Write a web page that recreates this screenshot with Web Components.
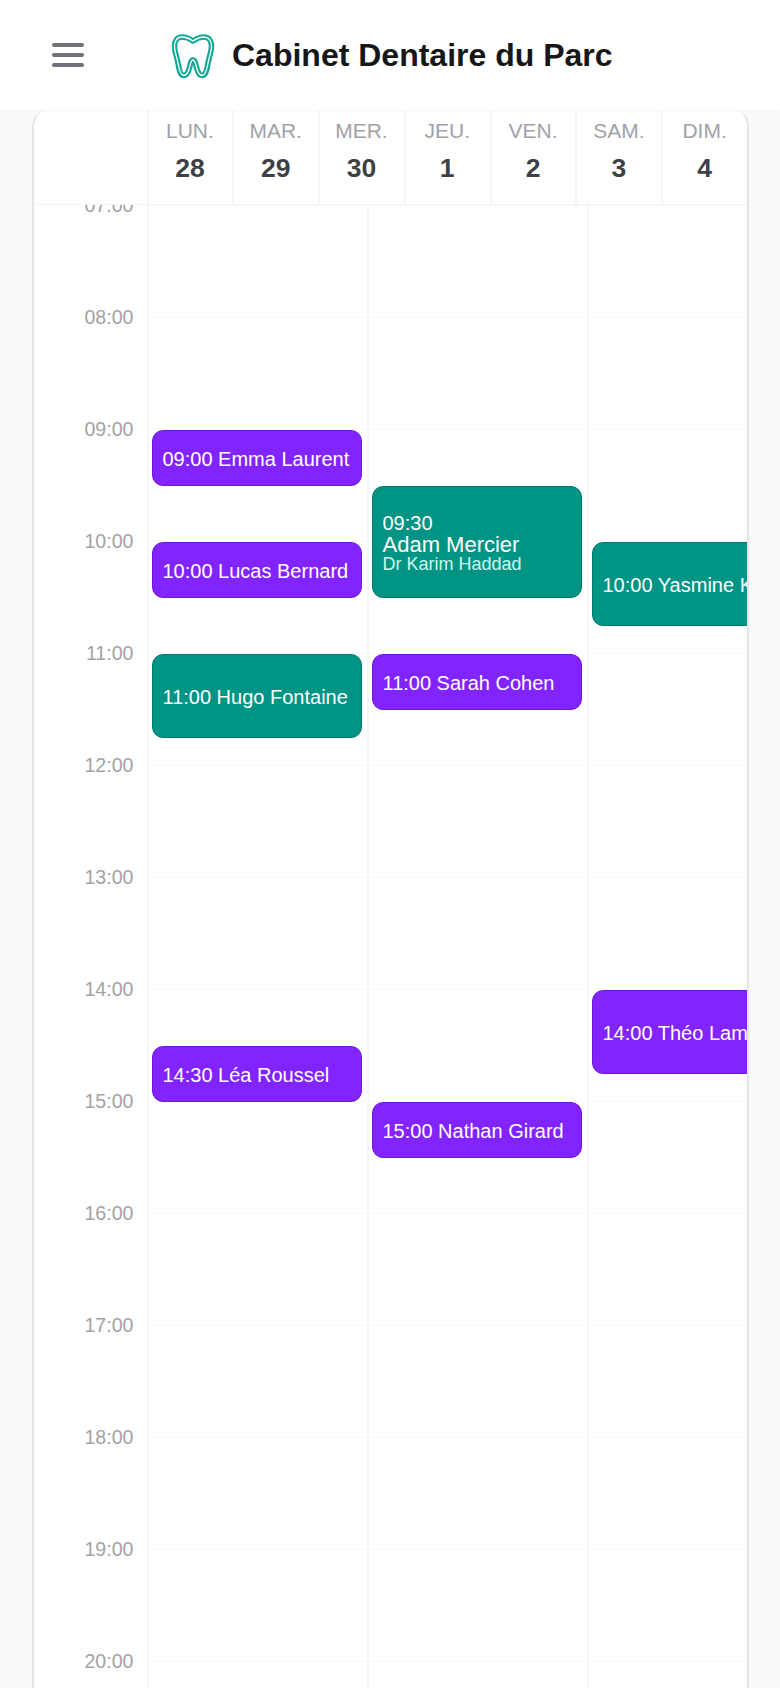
<!DOCTYPE html>
<html lang="fr">
<head>
<meta charset="utf-8">
<title>Cabinet Dentaire du Parc</title>
<style>
  html, body { margin: 0; height: 100%; }
  body {
    background: #fafafa;
    font-family: "Liberation Sans", Arial, sans-serif;
    overflow: hidden;
    display: flex;
    flex-direction: column;
  }
</style>
</head>
<body>
<app-header>Cabinet Dentaire du Parc</app-header>
<agenda-card>
  <week-head slot="head">
    <day-cell day="LUN." date="28"></day-cell>
    <day-cell day="MAR." date="29"></day-cell>
    <day-cell day="MER." date="30"></day-cell>
    <day-cell day="JEU." date="1"></day-cell>
    <day-cell day="VEN." date="2"></day-cell>
    <day-cell day="SAM." date="3"></day-cell>
    <day-cell day="DIM." date="4"></day-cell>
  </week-head>
  <time-axis slot="axis" from="7" to="20"></time-axis>
  <day-column>
    <appt-event start="09:00" mins="30">09:00 Emma Laurent</appt-event>
    <appt-event start="10:00" mins="30">10:00 Lucas Bernard</appt-event>
    <appt-event start="11:00" mins="45" kind="teal">11:00 Hugo Fontaine</appt-event>
    <appt-event start="14:30" mins="30">14:30 Léa Roussel</appt-event>
  </day-column>
  <day-column>
    <appt-event start="09:30" mins="60" kind="teal">
      <span slot="time">09:30</span>
      <span slot="name">Adam Mercier</span>
      <span slot="doctor">Dr Karim Haddad</span>
    </appt-event>
    <appt-event start="11:00" mins="30">11:00 Sarah Cohen</appt-event>
    <appt-event start="15:00" mins="30">15:00 Nathan Girard</appt-event>
  </day-column>
  <day-column>
    <appt-event start="10:00" mins="45" kind="teal">10:00 Yasmine Khelifi</appt-event>
    <appt-event start="14:00" mins="45">14:00 Théo Lambert</appt-event>
  </day-column>
</agenda-card>

<script>
const HOUR_HEIGHT = 112;
const FIRST_HOUR = 7;

class AppHeader extends HTMLElement {
  constructor() {
    super();
    this.attachShadow({mode: 'open'}).innerHTML = `
      <style>
        :host {
          display: flex;
          align-items: center;
          flex: none;
          height: 110px;
          background: #fff;
          box-shadow: 0 1px 2px rgba(0, 0, 0, .03);
          position: relative;
          z-index: 2;
        }
        .menu {
          display: flex;
          flex-direction: column;
          gap: 6px;
          width: 32px;
          margin: 0 87px 0 52px;
        }
        .menu span {
          height: 4px;
          border-radius: 2px;
          background: #71717a;
        }
        tooth-logo { margin: 2px 17px 0 0; }
        h1 {
          margin: 0;
          font-size: 32px;
          font-weight: 700;
          color: #171717;
          white-space: nowrap;
        }
      </style>
      <div class="menu"><span></span><span></span><span></span></div>
      <tooth-logo></tooth-logo>
      <h1><slot></slot></h1>`;
  }
}

class ToothLogo extends HTMLElement {
  constructor() {
    super();
    const d = 'M22 8C18.500 5.500 15 4 11 4 6 4 3.500 8 3.500 13c0 6 2.500 11 3.500 17 1 6 2.200 12.500 5.700 12.500 3 0 4.800-4 5.800-8 1-4 1.500-7.500 3.500-7.500s2.500 3.500 3.500 7.500c1 4 2.800 8 5.800 8 3.500 0 4.700-6.500 5.700-12.500 1-6 3.500-11 3.500-17 0-5-2.500-9-7.500-9-4 0-7.500 1.500-11 4Z';
    this.attachShadow({mode: 'open'}).innerHTML = `
      <style>
        :host { display: block; width: 44px; height: 46px; }
        svg { display: block; }
      </style>
      <svg viewBox="0 0 44 46" width="44" height="46" fill="none" stroke-linejoin="round">
        <path d="${d}" stroke="#14a896" stroke-width="5.600"></path>
        <path d="${d}" stroke="#fff" stroke-width="1.300"></path>
      </svg>`;
  }
}

class AgendaCard extends HTMLElement {
  constructor() {
    super();
    this.attachShadow({mode: 'open'}).innerHTML = `
      <style>
        :host {
          display: flex;
          flex-direction: column;
          flex: 1;
          min-height: 0;
          box-sizing: border-box;
          width: 717px;
          margin-left: 32px;
          background: #fff;
          border: solid #e4e4e7;
          border-width: 0 2px;
          border-radius: 16px 16px 0 0;
          overflow: hidden;
        }
        .grid {
          display: flex;
          flex: 1;
          min-height: 0;
          overflow: hidden;
          border-top: 1.400px solid #f4f4f5;
        }
      </style>
      <slot name="head"></slot>
      <div class="grid">
        <slot name="axis"></slot>
        <slot></slot>
      </div>`;
  }
}

class WeekHead extends HTMLElement {
  constructor() {
    super();
    this.attachShadow({mode: 'open'}).innerHTML = `
      <style>
        :host {
          display: grid;
          grid-template-columns: repeat(7, 1fr);
          flex: none;
          height: 94px;
          padding-left: 112.500px;
        }
      </style>
      <slot></slot>`;
  }
}

class DayCell extends HTMLElement {
  constructor() {
    super();
    this.attachShadow({mode: 'open'}).innerHTML = `
      <style>
        :host {
          display: flex;
          flex-direction: column;
          align-items: center;
          box-sizing: border-box;
          padding: 8px 1px 0 0;
          border-left: 2px solid #f6f6f7;
        }
        .day { font-size: 21px; line-height: 26px; color: #a1a1aa; }
        .date { font-size: 26.500px; line-height: 30px; margin-top: 9px; font-weight: 700; color: #3f3f46; }
      </style>
      <div class="day">${this.getAttribute('day')}</div>
      <div class="date">${this.getAttribute('date')}</div>`;
  }
}

class TimeAxis extends HTMLElement {
  constructor() {
    super();
    const from = Number(this.getAttribute('from'));
    const to = Number(this.getAttribute('to'));
    let rows = '';
    for (let h = from; h <= to; h++) {
      rows += `<div class="row"><span>${String(h).padStart(2, '0')}:00</span></div>`;
    }
    this.attachShadow({mode: 'open'}).innerHTML = `
      <style>
        :host {
          display: block;
          flex: none;
          box-sizing: border-box;
          width: 112.500px;
          padding-right: 13px;
          text-align: right;
          font-size: 19.600px;
          line-height: 24px;
          color: #a3a3a3;
        }
        .row { display: flow-root; height: ${HOUR_HEIGHT}px; }
        .row span { display: block; margin-top: -12px; }
      </style>
      ${rows}`;
  }
}

class DayColumn extends HTMLElement {
  constructor() {
    super();
    this.attachShadow({mode: 'open'}).innerHTML = `
      <style>
        :host {
          display: grid;
          flex: none;
          box-sizing: border-box;
          width: 220px;
          grid-template-columns: 210px;
          grid-auto-rows: ${HOUR_HEIGHT / 4}px;
          padding: 1.400px 4.500px 0 3.500px;
          border-left: 2px solid #f7f7f8;
          background: linear-gradient(#f8f8f8 1.400px, transparent 1.400px) 0 0 / 100% ${HOUR_HEIGHT}px;
        }
      </style>
      <slot></slot>`;
  }
}

class ApptEvent extends HTMLElement {
  constructor() {
    super();
    const [h, m] = this.getAttribute('start').split(':').map(Number);
    const row = (h - FIRST_HOUR) * 4 + m / 15 + 1;
    const span = Number(this.getAttribute('mins')) / 15;
    this.style.gridRow = `${row} / span ${span}`;
    this.attachShadow({mode: 'open'}).innerHTML = `
      <style>
        :host {
          display: flex;
          flex-direction: column;
          justify-content: center;
          box-sizing: border-box;
          padding: 1.500px 9.500px 0;
          border: 1.400px solid #6d14d9;
          border-radius: 11px;
          background: #8224ff;
          color: #fff;
          font-size: 20px;
          line-height: 24px;
          white-space: nowrap;
          overflow: hidden;
        }
        :host([kind="teal"]) {
          background: #009485;
          border-color: #00796b;
        }
        ::slotted([slot="time"]) { font-size: 20px; line-height: 21px; }
        ::slotted([slot="name"]) { font-size: 22px; line-height: 22px; }
        ::slotted([slot="doctor"]) { font-size: 18px; line-height: 17px; color: #ccfbf1; }
      </style>
      <slot name="time"></slot>
      <slot name="name"></slot>
      <slot name="doctor"></slot>
      <div><slot></slot></div>`;
  }
}

customElements.define('tooth-logo', ToothLogo);
customElements.define('app-header', AppHeader);
customElements.define('agenda-card', AgendaCard);
customElements.define('week-head', WeekHead);
customElements.define('day-cell', DayCell);
customElements.define('time-axis', TimeAxis);
customElements.define('day-column', DayColumn);
customElements.define('appt-event', ApptEvent);
</script>
</body>
</html>
